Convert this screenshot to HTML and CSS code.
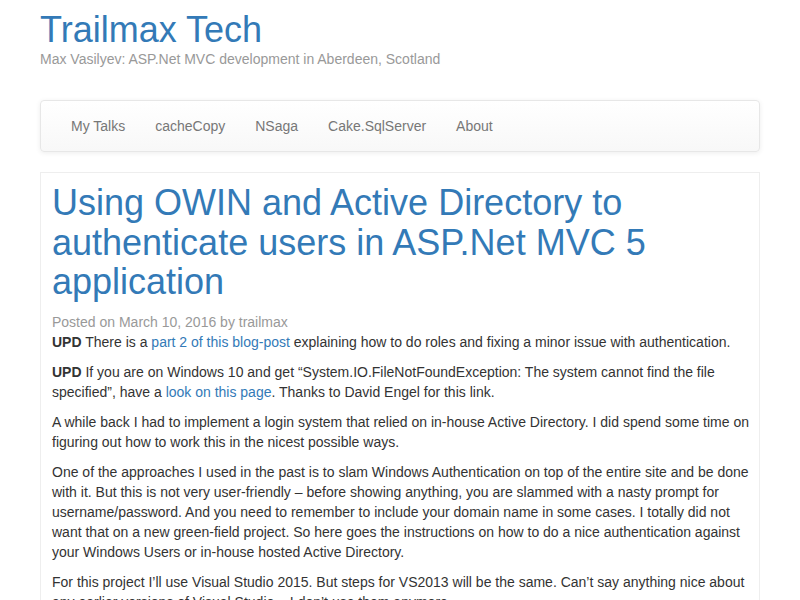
FILE: index.html
```html
<!DOCTYPE html>
<html>
<head>
<meta charset="utf-8">
<link rel="stylesheet" href="styles.css">
</head>
<body>
<div class="container">
  <header class="site-header">
    <h1 class="site-title"><a href="#">Trailmax Tech</a></h1>
    <div class="site-desc">Max Vasilyev: ASP.Net MVC development in Aberdeen, Scotland</div>
  </header>
  <nav class="navbar">
    <ul class="nav">
      <li><a href="#">My Talks</a></li>
      <li><a href="#">cacheCopy</a></li>
      <li><a href="#">NSaga</a></li>
      <li><a href="#">Cake.SqlServer</a></li>
      <li><a href="#">About</a></li>
    </ul>
  </nav>
  <article class="post">
    <h1 class="post-title"><a href="#">Using OWIN and Active Directory to authenticate users in ASP.Net MVC 5 application</a></h1>
    <div class="meta">Posted on March 10, 2016 by trailmax</div>
    <p><strong>UPD</strong> There is a <a href="#">part 2 of this blog-post</a> explaining how to do roles and fixing a minor issue with authentication.</p>
    <p><strong>UPD</strong> If you are on Windows 10 and get “System.IO.FileNotFoundException: The system cannot find the file specified”, have a <a href="#">look on this page</a>. Thanks to David Engel for this link.</p>
    <p>A while back I had to implement a login system that relied on in-house Active Directory. I did spend some time on figuring out how to work this in the nicest possible ways.</p>
    <p>One of the approaches I used in the past is to slam Windows Authentication on top of the entire site and be done with it. But this is not very user-friendly – before showing anything, you are slammed with a nasty prompt for username/password. And you need to remember to include your domain name in some cases. I totally did not want that on a new green-field project. So here goes the instructions on how to do a nice authentication against your Windows Users or in-house hosted Active Directory.</p>
    <p>For this project I’ll use Visual Studio 2015. But steps for VS2013 will be the same. Can’t say anything nice about any earlier versions of Visual Studio – I don’t use them anymore.</p>
  </article>
</div>
</body>
</html>
```
FILE: styles.css
```css
html, body { margin: 0; padding: 0; }
body {
  font-family: "Liberation Sans", Arial, sans-serif;
  font-size: 14px;
  line-height: 20px;
  color: #333;
  background: #fff;
}
a { color: #337ab7; text-decoration: none; }
.container { width: 720px; margin: 0 auto; }
.site-title {
  margin: 10px 0 0;
  font-size: 36px;
  font-weight: normal;
  line-height: 39px;
}
.site-desc { color: #999; }
.navbar {
  margin-top: 31px;
  height: 50px;
  border: 1px solid #e7e7e7;
  border-radius: 4px;
  background: linear-gradient(to bottom, #fff 0%, #f8f8f8 100%);
  box-shadow: inset 0 1px 0 rgba(255,255,255,.15), 0 1px 5px rgba(0,0,0,.075);
  margin-bottom: 20px;
}
.nav {
  list-style: none;
  margin: 0;
  padding: 0 15px;
  display: flex;
}
.nav a {
  display: block;
  padding: 15px;
  color: #777;
  line-height: 20px;
}
.post {
  border: 1px solid #eee;
  padding: 10px 10px 10px 11px;
}
.post-title {
  margin: 0 0 10px;
  font-size: 36px;
  font-weight: normal;
  line-height: 39.6px;
}
.meta { color: #999; }
.post p { margin: 0 0 10px; }
```
